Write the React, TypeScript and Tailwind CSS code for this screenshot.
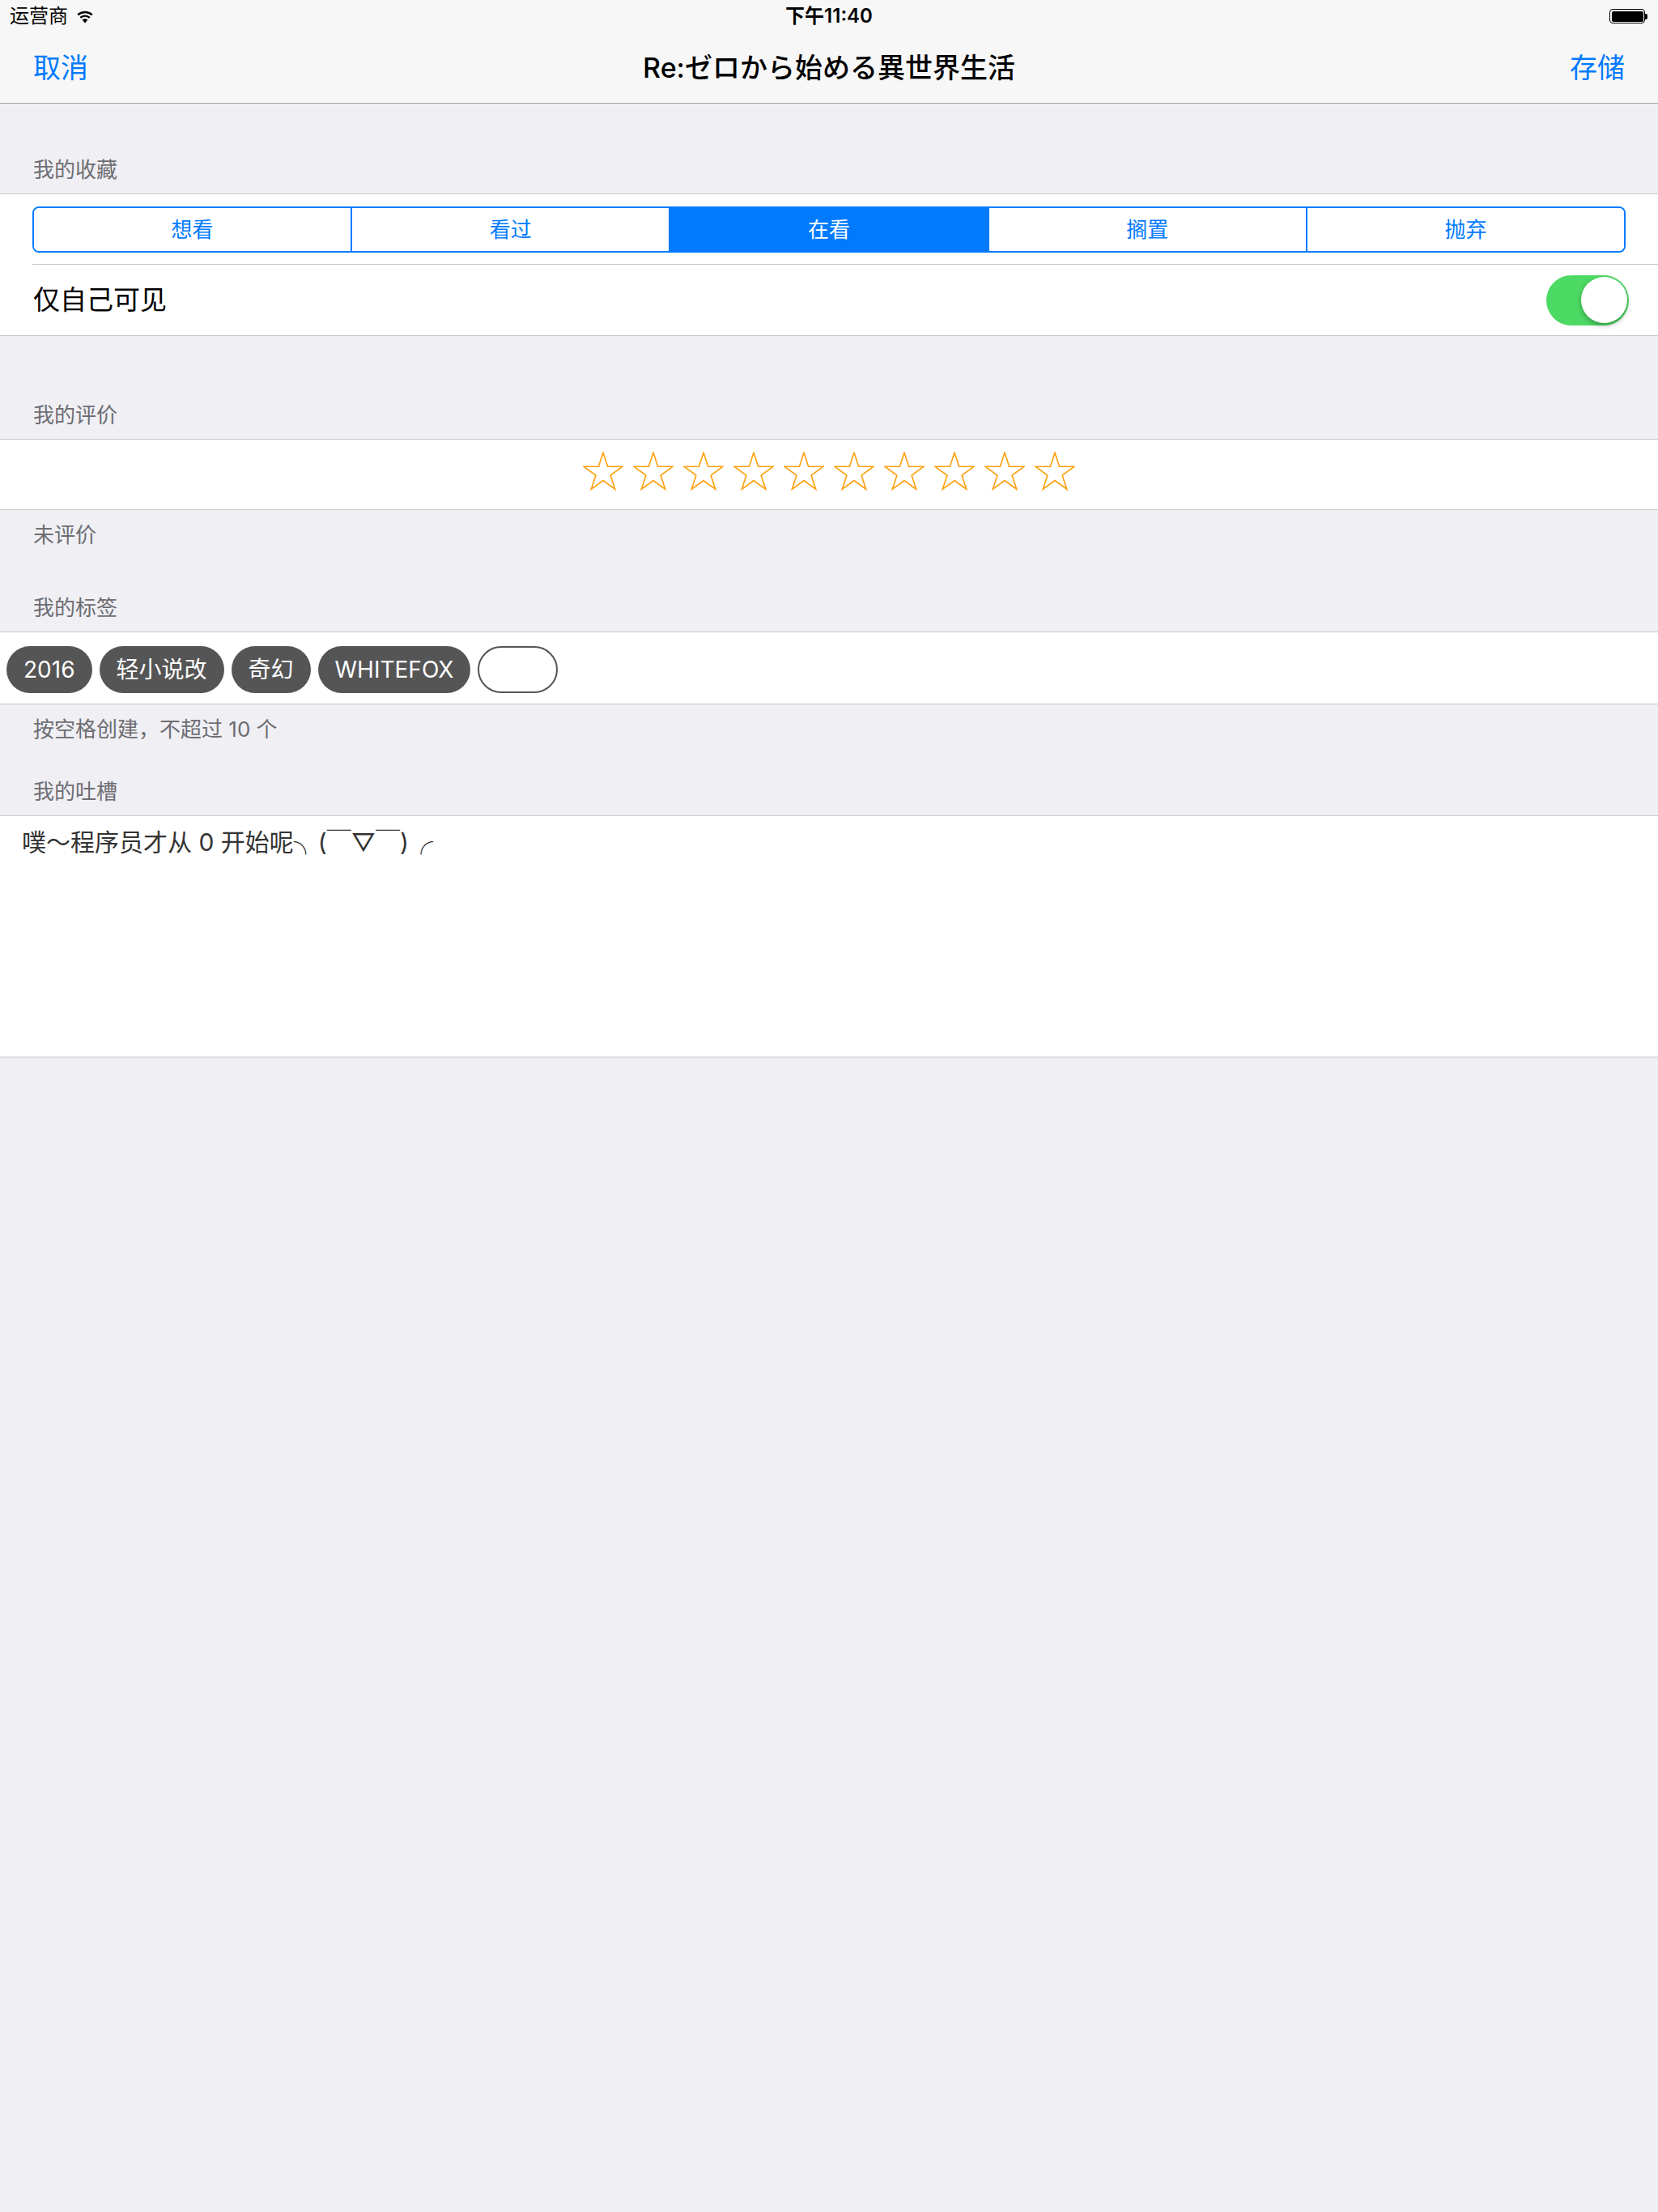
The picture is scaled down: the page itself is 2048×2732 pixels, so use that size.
import React from "react";

const segments = ["想看", "看过", "在看", "搁置", "抛弃"];
const tags = ["2016", "轻小说改", "奇幻", "WHITEFOX"];

const Star = () => (
  <svg width="50" height="48" viewBox="0 0 50 48" className="shrink-0">
    <polygon
      points="25,1 30.6,18.3 48.8,18.3 34.1,29 39.7,46.2 25,35.5 10.3,46.2 15.9,29 1.2,18.3 19.4,18.3"
      fill="none"
      stroke="#FF9F0A"
      strokeWidth="1.6"
      strokeLinejoin="miter"
    />
  </svg>
);

const SectionHeader = ({ text, h }: { text: string; h: string }) => (
  <div className={`flex items-end px-[41px] pb-[16px] ${h}`}>
    <span className="text-[26px] leading-[26px] text-[#6D6D72]">{text}</span>
  </div>
);

const App = () => {
  return (
    <div className="min-h-[2732px] w-full bg-[#EFEFF4] font-['Inter','Noto_Sans_CJK_SC',sans-serif]">
      {/* status + nav */}
      <div className="bg-[#F7F7F7] border-b border-[#A7A7AA]">
        <div className="relative flex h-[40px] items-center px-[12px]">
          <div className="flex items-center gap-[10px]">
            <span className="text-[24px] leading-none text-black">运营商</span>
            <svg width="22" height="17" viewBox="0 0 22 17">
              <path d="M11 16.5 L7.6 12.6 A5 5 0 0 1 14.4 12.6 Z" fill="#000" />
              <path d="M5.2 9.9 A8.6 8.6 0 0 1 16.8 9.9" fill="none" stroke="#000" strokeWidth="2.4" />
              <path d="M2.2 6.4 A13 13 0 0 1 19.8 6.4" fill="none" stroke="#000" strokeWidth="2.4" />
            </svg>
          </div>
          <span className="absolute left-1/2 -translate-x-1/2 text-[24px] font-semibold leading-none text-black">
            下午11:40
          </span>
          <div className="ml-auto flex items-center pr-[1px]">
            <div className="h-[18px] w-[44px] rounded-[4px] border-[1.5px] border-black p-[1.5px]">
              <div className="h-full w-full rounded-[2px] bg-black"></div>
            </div>
            <div className="h-[7px] w-[3px] rounded-r-[2px] bg-black"></div>
          </div>
        </div>
        <div className="relative flex h-[87px] items-center justify-between px-[41px]">
          <span className="text-[34px] leading-none text-[#007AFF]">取消</span>
          <span className="absolute left-1/2 -translate-x-1/2 text-[34px] font-medium leading-none text-black">
            Re:ゼロから始める異世界生活
          </span>
          <span className="text-[34px] leading-none text-[#007AFF]">存储</span>
        </div>
      </div>

      <SectionHeader text="我的收藏" h="h-[111px]" />
      <div className="border-y border-[#C8C7CC] bg-white">
        <div className="flex h-[86px] items-center pl-[40px] pr-[40px]">
          <div className="flex h-[57px] w-full overflow-hidden rounded-[8px] border-2 border-[#007AFF]">
            {segments.map((s, i) => (
              <div
                key={s}
                className={`flex flex-1 items-center justify-center text-[26px] ${
                  i > 0 ? "border-l-2 border-[#007AFF]" : ""
                } ${i === 2 ? "bg-[#007AFF] text-white" : "bg-white text-[#007AFF]"}`}
              >
                {s}
              </div>
            ))}
          </div>
        </div>
        <div className="ml-[40px] h-px bg-[#C8C7CC]"></div>
        <div className="flex h-[87px] items-center justify-between pl-[41px] pr-[36px]">
          <span className="text-[33px] leading-none text-black">仅自己可见</span>
          <div className="flex h-[62px] w-[102px] items-center justify-end rounded-full bg-[#4CD964] pr-[2px]">
            <div className="h-[57px] w-[57px] rounded-full bg-white shadow-[0_3px_6px_rgba(0,0,0,0.3)]"></div>
          </div>
        </div>
      </div>

      <SectionHeader text="我的评价" h="h-[127px]" />
      <div className="flex h-[88px] items-start justify-center gap-[12px] border-y border-[#C8C7CC] bg-white pt-[15px]">
        {Array.from({ length: 10 }).map((_, i) => (
          <Star key={i} />
        ))}
      </div>
      <div className="px-[41px] pt-[18px]">
        <span className="text-[26px] leading-[26px] text-[#6D6D72]">未评价</span>
      </div>

      <SectionHeader text="我的标签" h="h-[104px]" />
      <div className="flex h-[90px] items-start gap-[9px] border-y border-[#C8C7CC] bg-white pl-[8px] pt-[17px]">
        {tags.map((t) => (
          <div
            key={t}
            className="flex h-[58px] items-center rounded-full bg-[#555555] px-[21px] text-[28px] leading-none text-white"
          >
            {t}
          </div>
        ))}
        <div className="h-[58px] w-[99px] rounded-full border-2 border-[#555555] bg-white"></div>
      </div>
      <div className="px-[41px] pt-[18px]">
        <span className="text-[26px] leading-[26px] text-[#6D6D72]">按空格创建，不超过 10 个</span>
      </div>

      <SectionHeader text="我的吐槽" h="h-[91px]" />
      <div className="h-[299px] border-y border-[#C8C7CC] bg-white px-[27px] pt-[14px]">
        <p className="text-[30px] leading-[36px] text-[#333333]">噗～程序员才从 0 开始呢╮(￣▽￣)╭</p>
      </div>
    </div>
  );
};

export default App;
